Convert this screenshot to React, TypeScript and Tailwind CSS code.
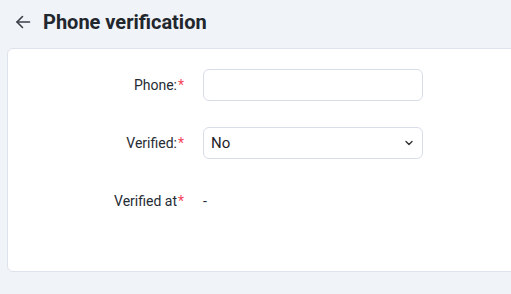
import React from 'react';

const Required: React.FC = () => <span className="text-[#f5475b] ml-[1px]">*</span>;

const App: React.FC = () => {
  return (
    <div className="w-[511px] h-[294px] overflow-hidden bg-[#f0f3f8] font-['Roboto',sans-serif] text-[#262b33]">
      <div className="h-[48px] flex items-center pl-[15px] pb-[4px] gap-[12px]">
        <svg width="16" height="16" viewBox="0 0 16 16" fill="none" stroke="#3a3f47" strokeWidth="1.6" strokeLinecap="round" strokeLinejoin="round">
          <path d="M14.5 8H2" />
          <path d="M7.5 2.5 2 8l5.5 5.5" />
        </svg>
        <h1 className="text-[20px] font-bold leading-none text-[#22262d]">Phone verification</h1>
      </div>
      <div className="ml-[7px] w-[520px] h-[224px] bg-white border border-[#dde3ec] rounded-[6px] pt-[20px]">
        <div className="flex flex-col gap-[26px] text-[14px]">
          <div className="flex items-center h-[32px]">
            <label className="w-[176px] text-right">Phone:<Required /></label>
            <input className="ml-[19px] w-[220px] h-[32px] border border-[#d8dee8] rounded-[6px] px-2 outline-none" />
          </div>
          <div className="flex items-center h-[32px]">
            <label className="w-[176px] text-right">Verified:<Required /></label>
            <div className="ml-[19px] w-[220px] h-[32px] border border-[#d8dee8] rounded-[6px] flex items-center justify-between pl-[7px] pr-[8px]">
              <span className="text-[15px] text-[#1f2329]">No</span>
              <svg width="10" height="10" viewBox="0 0 10 10" fill="none" stroke="#333" strokeWidth="1.4" strokeLinecap="round" strokeLinejoin="round">
                <path d="M2 3.5 5 6.5 8 3.5" />
              </svg>
            </div>
          </div>
          <div className="flex items-center h-[32px]">
            <label className="w-[176px] text-right">Verified at<Required /></label>
            <span className="ml-[19px]">-</span>
          </div>
        </div>
      </div>
    </div>
  );
};

export default App;
